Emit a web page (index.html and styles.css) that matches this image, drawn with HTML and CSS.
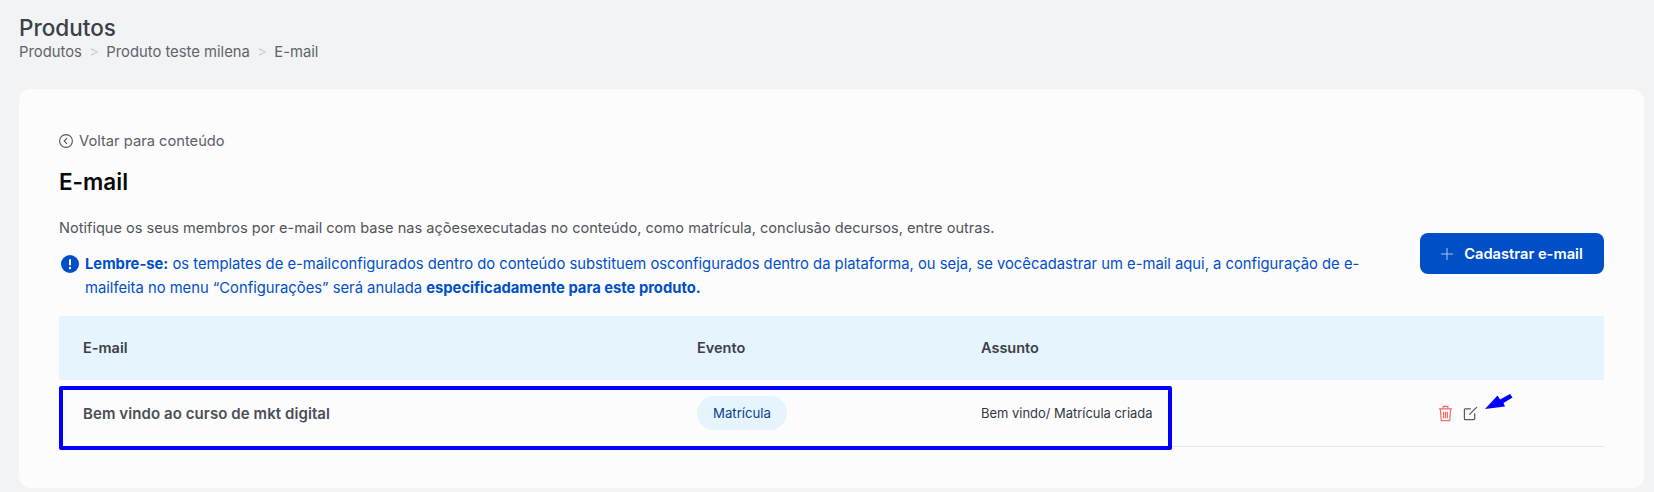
FILE: index.html
```html
<!DOCTYPE html>
<html lang="pt-BR">
<head>
<meta charset="utf-8">
<title>E-mail</title>
<link rel="stylesheet" href="styles.css">
</head>
<body>
<header class="page-head">
  <h1 class="page-title">Produtos</h1>
  <nav class="crumbs">
    <span>Produtos</span><span class="sep">&gt;</span><span>Produto teste milena</span><span class="sep">&gt;</span><span>E-mail</span>
  </nav>
</header>
<main class="card">
  <a class="back">
    <svg class="back-icon" viewBox="0 0 14 14" width="14" height="14"><circle cx="7" cy="7" r="6.400" fill="none" stroke="#53585f" stroke-width="1.100"/><path d="M8 4.200 5.200 7 8 9.800" fill="none" stroke="#53585f" stroke-width="1.100"/></svg>
    <span>Voltar para conteúdo</span>
  </a>
  <h2 class="section-title">E-mail</h2>
  <div class="intro">
    <div class="intro-text">
      <p class="lead">Notifique os seus membros por e-mail com base nas açõesexecutadas no conteúdo, como matrícula, conclusão decursos, entre outras.</p>
      <div class="notice">
        <svg class="notice-icon" viewBox="0 0 18 18" width="18" height="18"><circle cx="9" cy="9" r="9" fill="#004fc7"/><rect x="8" y="4" width="2" height="6.500" rx="1" fill="#fff"/><circle cx="9" cy="13" r="1.200" fill="#fff"/></svg>
        <p><strong>Lembre-se:</strong> os templates de e-mailconfigurados dentro do conteúdo substituem osconfigurados dentro da plataforma, ou seja, se vocêcadastrar um e-mail aqui, a configuração de e-mailfeita no menu “Configurações” será anulada <strong>especificadamente para este produto.</strong></p>
      </div>
    </div>
    <button class="primary" type="button">
      <svg viewBox="0 0 12 12" width="12" height="12"><path d="M6 0v12M0 6h12" stroke="#a9c4ee" stroke-width="1" fill="none"/></svg>
      <span>Cadastrar e-mail</span>
    </button>
  </div>
  <div class="table">
    <div class="row head">
      <div>E-mail</div><div>Evento</div><div>Assunto</div><div></div>
    </div>
    <div class="row body">
      <div class="name">Bem vindo ao curso de mkt digital</div>
      <div><span class="pill">Matrícula</span></div>
      <div class="subject">Bem vindo/ Matrícula criada</div>
      <div class="actions">
        <svg viewBox="0 0 16 18" width="15" height="17"><path d="M1 4h14M5.500 4V1.500h5V4M2.500 4l1 12.500h9l1-12.500M6 7v7M8 7v7M10 7v7" fill="none" stroke="#f26d6d" stroke-width="1.300"/></svg>
        <svg viewBox="0 0 16 16" width="15" height="15"><path d="M8 3H2.500a1 1 0 0 0-1 1v9.500a1 1 0 0 0 1 1h9a1 1 0 0 0 1-1V8M7 9 14.500 1.500" fill="none" stroke="#555a63" stroke-width="1.300" stroke-linecap="round"/></svg>
      </div>
    </div>
  </div>
  <div class="mark-box"></div>
  <svg class="mark-arrow" viewBox="0 0 28 16" width="28" height="16"><path d="M0 15 12.500 1.500 15 5.500 25 0 27.500 3.500 18.500 9 20 12.500Z" fill="#0000ff"/></svg>
</main>
</body>
</html>
```
FILE: styles.css
```css
* { box-sizing: border-box; }
html, body { margin: 0; padding: 0; }
body {
  width: 1654px;
  height: 492px;
  overflow: hidden;
  background: #f2f3f5;
  font-family: "Inter", "Liberation Sans", sans-serif;
  color: #3c4046;
}
.page-head { padding: 14px 19px 0; height: 89px; }
.page-title { margin: 0; font-size: 22.500px; line-height: 28px; font-weight: 500; color: #3b4046; }
.crumbs { display: flex; gap: 7.300px; font-size: 14.800px; line-height: 20px; color: #5f646b; margin-top: 0; }
.sep { color: #ccced3; }
.card {
  position: relative;
  margin: 0 10px 0 19px;
  height: 399px;
  background: #fcfcfd;
  border-radius: 12px;
  padding: 42px 40px 0;
}
.back { display: flex; align-items: center; gap: 6px; font-size: 14.700px; line-height: 20px; color: #5b6068; }
.section-title { margin: 17px 0 0; font-size: 22.500px; line-height: 28px; font-weight: 600; color: #08090b; }
.intro { display: flex; justify-content: space-between; align-items: flex-start; margin-top: 20px; }
.intro-text { width: 1320px; }
.lead { margin: 0; font-size: 14.570px; line-height: 24px; color: #50555c; }
.notice { display: flex; gap: 6px; margin-top: 12px; font-size: 14.770px; line-height: 24px; color: #004fc7; }
.notice p { margin: 0; width: 1284px; }
.notice strong { font-weight: 700; }
.notice-icon { flex: none; margin: 3px 0 0 2px; }
.primary {
  display: flex; align-items: center; justify-content: center; gap: 11px;
  flex: none;
  width: 184px; height: 41px; margin-top: 17px;
  background: #004fc7; color: #fff; border: 0; border-radius: 8px;
  font: 600 14.700px "Inter", "Liberation Sans", sans-serif;
}
.table { margin-top: 16px; }
.row { display: grid; grid-template-columns: 614px 284px 1fr 190px; align-items: center; padding-left: 24px; }
.head { height: 64px; padding-bottom: 1px; background: #e6f4fe; font-size: 14.500px; font-weight: 600; color: #3c4046; }
.body { height: 67px; border-bottom: 1px solid #e6e7ea; font-size: 12.950px; }
.name { font-size: 15px; font-weight: 600; letter-spacing: 0.080px; color: #4a4e55; }
.pill { display: inline-flex; align-items: center; height: 34px; padding: 0 16px; border-radius: 17px; background: #e6f4fe; color: #0b3f8f; font-size: 13.200px; }
.subject { color: #33373d; }
.actions { display: flex; gap: 10px; align-items: center; padding-left: 24px; }
.mark-box {
  position: absolute; left: 40px; top: 297px; width: 1113px; height: 64px;
  border: 4px solid #0000ff; border-radius: 2px;
}
.mark-arrow { position: absolute; left: 1466px; top: 305px; }
```
